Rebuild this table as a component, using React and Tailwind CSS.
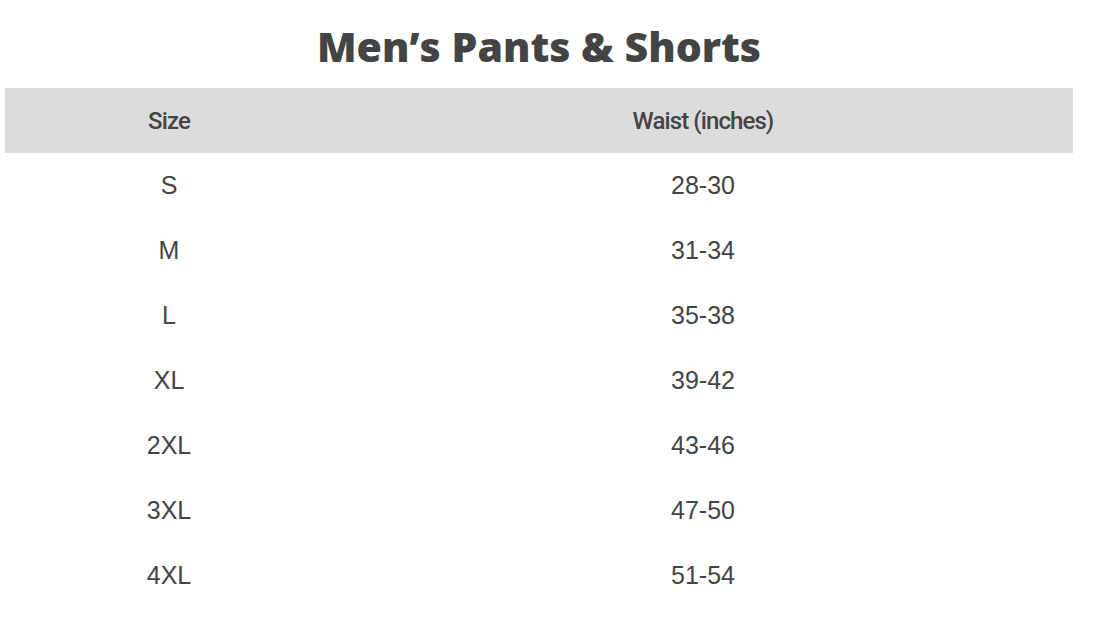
import React from "react";

const rows = [
  ["S", "28-30"],
  ["M", "31-34"],
  ["L", "35-38"],
  ["XL", "39-42"],
  ["2XL", "43-46"],
  ["3XL", "47-50"],
  ["4XL", "51-54"],
];

function App() {
  return (
    <div className="w-[1106px] h-[630px] bg-white pl-[5px] text-[#444]">
      <div className="w-[1068px]">
        <h1 className="h-[88px] pt-[20px] text-center text-[41px] leading-[52px] font-extrabold font-['Open_Sans',sans-serif]">
          Men’s Pants &amp; Shorts
        </h1>
        <table className="w-full border-collapse font-['Liberation_Sans',Arial,sans-serif]">
          <thead>
            <tr className="bg-[#dcdcdc] h-[65px] text-[24px] tracking-[-0.9px] font-['Roboto',sans-serif]">
              <th className="w-[328px] font-medium">Size</th>
              <th className="font-medium">Waist (inches)</th>
            </tr>
          </thead>
          <tbody>
            {rows.map(([size, waist]) => (
              <tr key={size} className="h-[65px] text-[25px]">
                <td className="text-center">{size}</td>
                <td className="text-center">{waist}</td>
              </tr>
            ))}
          </tbody>
        </table>
      </div>
    </div>
  );
}

export default App;
